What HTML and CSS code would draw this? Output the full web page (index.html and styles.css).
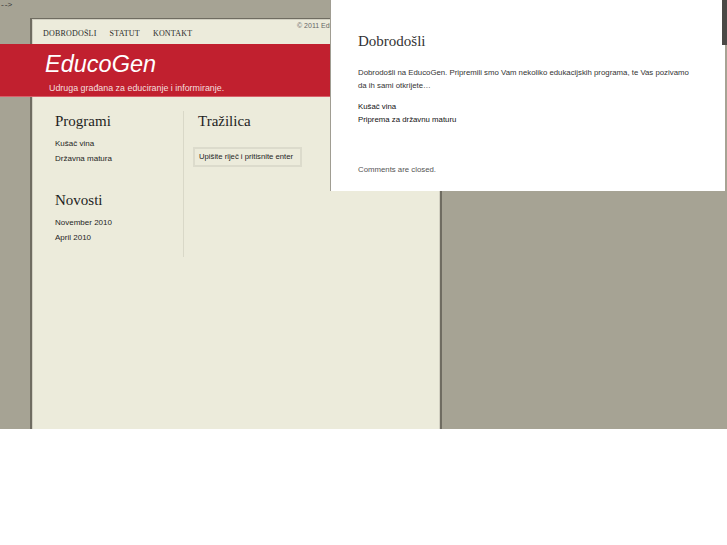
FILE: index.html
```html
<!DOCTYPE html>
<html>
<head>
<meta charset="utf-8">
<link rel="stylesheet" href="styles.css">
</head>
<body>
<div class="page">
  <div class="comment">--&gt;</div>
  <div class="container">
    <div class="topbar">
      <nav class="nav">
        <a>DOBRODOŠLI</a>
        <a>STATUT</a>
        <a>KONTAKT</a>
      </nav>
      <div class="copy">© 2011 EducoGen</div>
    </div>
    <header class="banner">
      <h1 class="logo">EducoGen</h1>
      <p class="tagline">Udruga građana za educiranje i informiranje.</p>
    </header>
    <div class="columns">
      <div class="col left">
        <h2>Programi</h2>
        <ul>
          <li>Kušač vina</li>
          <li>Državna matura</li>
        </ul>
        <h2 class="second">Novosti</h2>
        <ul>
          <li>November 2010</li>
          <li>April 2010</li>
        </ul>
      </div>
      <div class="col right">
        <h2>Tražilica</h2>
        <div class="search">Upišite riječ i pritisnite enter</div>
      </div>
    </div>
  </div>
  <div class="popup">
    <h2>Dobrodošli</h2>
    <p class="intro">Dobrodošli na EducoGen. Pripremili smo Vam nekoliko edukacijskih programa, te Vas pozivamo da ih sami otkrijete…</p>
    <p class="links">Kušač vina<br>Priprema za državnu maturu</p>
    <p class="closed">Comments are closed.</p>
    <div class="thumb"></div>
  </div>
</div>
</body>
</html>
```
FILE: styles.css
```css
html, body {
  margin: 0;
  padding: 0;
  background: #ffffff;
}
.page {
  position: relative;
  height: 429px;
  background: #a6a394;
  overflow: hidden;
  font-family: "Liberation Sans", Arial, sans-serif;
  color: #222;
}
.comment {
  height: 18px;
  font-size: 8px;
  line-height: 10px;
  color: #333;
  font-family: "Liberation Mono", monospace;
  letter-spacing: -1px;
}
.container {
  margin-left: 30px;
  width: 408px;
  height: 420px;
  background: #ecebdb;
  border-left: 2px solid #6f6c61;
  border-right: 2px solid #6f6c61;
  box-shadow: inset 1px 0 0 #d2d0c2, inset -1px 0 0 #d2d0c2, inset 0 1px 0 #d2d0c2;
  border-top: 1px solid #6f6c61;
}
.topbar {
  display: flex;
  justify-content: space-between;
  height: 25px;
}
.nav {
  display: flex;
  gap: 13px;
  padding: 10px 0 0 11px;
}
.nav a {
  font-family: "Liberation Serif", "Times New Roman", serif;
  font-size: 8px;
  letter-spacing: 0.2px;
  color: #2a2a2a;
}
.copy {
  font-size: 7px;
  color: #666;
  padding-top: 3px;
  white-space: nowrap;
  width: 143px;
}
.banner {
  margin-left: -32px;
  width: 444px;
  height: 52px;
  background: #c1202f;
  border-bottom: 1px solid #d8606a;
  padding-left: 45px;
  box-sizing: content-box;
}
.logo {
  margin: 0;
  padding-top: 7px;
  font-weight: normal;
  font-style: italic;
  font-size: 23.5px;
  line-height: 26px;
  color: #fff;
}
.tagline {
  margin: 6px 0 0 4px;
  font-size: 8.9px;
  line-height: 11px;
  color: #f4dede;
}
.columns {
  display: flex;
  padding-top: 16px;
}
.col.left {
  width: 128px;
  padding-left: 23px;
  height: 144px;
  margin-top: -2px;
  padding-top: 2px;
  border-right: 1px solid #d9d8c8;
}
.col.right {
  padding-left: 14px;
}
h2 {
  margin: 0;
  font-family: "Liberation Serif", "Times New Roman", serif;
  font-weight: normal;
  font-size: 15px;
  line-height: 17px;
  color: #1e1e1e;
}
.col ul {
  list-style: none;
  margin: 6px 0 0 0;
  padding: 0;
}
.col li {
  font-size: 8px;
  line-height: 15px;
  color: #1e1e1e;
}
.col h2.second {
  margin-top: 26px;
}
.search {
  margin: 17px 0 0 -5px;
  width: 101px;
  height: 16px;
  border: 2px solid #dcdbcc;
  padding-left: 4px;
  font-size: 7.7px;
  line-height: 16px;
  color: #1e1e1e;
}
.popup {
  position: absolute;
  top: 0;
  left: 330px;
  width: 395px;
  height: 191px;
  background: #fff;
  border-left: 1px solid #a09d92;
  box-sizing: border-box;
  padding: 33px 0 0 27px;
}
.popup h2 {
  font-size: 15px;
  line-height: 17px;
  color: #333;
}
.popup p {
  margin: 0;
  font-size: 7.8px;
  line-height: 12.5px;
  color: #333;
}
.popup .intro {
  margin-top: 17px;
  width: 340px;
}
.popup .links {
  margin-top: 8px;
  color: #111;
  line-height: 13px;
}
.popup .closed {
  margin-top: 38px;
  color: #555;
}
.thumb {
  position: absolute;
  top: 0;
  right: -2px;
  width: 5px;
  height: 45px;
  background: #4a4946;
}
```
